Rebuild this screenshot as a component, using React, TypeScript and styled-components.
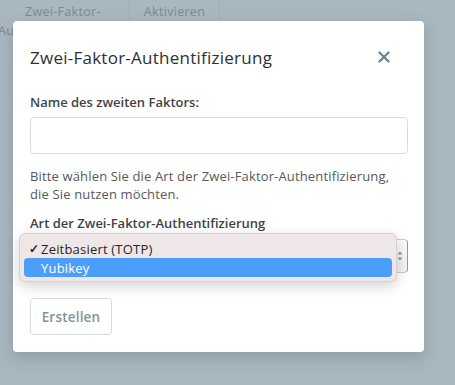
import React from "react";
import styled, { createGlobalStyle } from "styled-components";

const FONT = `"Open Sans", "Noto Sans", "Liberation Sans", sans-serif`;

const GlobalStyle = createGlobalStyle`
  html, body { margin: 0; padding: 0; }
  body { background: #a9b7bf; font-family: ${FONT}; }
`;

const Page = styled.div`
  position: relative;
  width: 455px;
  height: 385px;
  overflow: hidden;
  background: #a9b7bf;
`;

const BgRow = styled.div`
  display: flex;
  align-items: flex-start;
  height: 60px;
`;

const BgCell = styled.div<{ $w: number }>`
  width: ${(p) => p.$w}px;
  box-sizing: border-box;
  height: 60px;
  border-right: 1px solid #9eadb5;
  color: #7a8b94;
  font-size: 12.5px;
  font-weight: 500;
  letter-spacing: 0.3px;
  line-height: 19px;
  text-align: center;
  padding-top: 2px;
  overflow: hidden;
`;

const BgLine = styled.div<{ $indent: number }>`
  margin-left: ${(p) => p.$indent}px;
  white-space: nowrap;
`;

const BgCellLeft = styled(BgCell)`
  text-align: left;
`;

const Modal = styled.div`
  position: absolute;
  left: 13px;
  top: 21px;
  width: 411px;
  height: 331px;
  box-sizing: border-box;
  background: #ffffff;
  border-radius: 4px;
  box-shadow: 0 6px 16px rgba(60, 80, 90, 0.25);
  padding: 22px 16px 17px 17px;
  display: flex;
  flex-direction: column;
`;

const Header = styled.div`
  display: flex;
  align-items: center;
  justify-content: space-between;
  height: 28px;
`;

const Title = styled.h2`
  margin: 0;
  font-size: 17px;
  font-weight: 500;
  color: #2d3133;
  letter-spacing: 0.25px;
`;

const CloseButton = styled.button`
  border: 0;
  background: none;
  padding: 0;
  margin-right: 17px;
  width: 14px;
  height: 14px;
  display: flex;
  align-items: center;
  justify-content: center;
  cursor: pointer;
`;

const Label = styled.label<{ $mt: number }>`
  display: block;
  margin-top: ${(p) => p.$mt}px;
  font-size: 13px;
  font-weight: 600;
  line-height: 18px;
  color: #3f4446;
`;

const Input = styled.input`
  box-sizing: border-box;
  margin-top: 6px;
  width: 378px;
  height: 37px;
  border: 1px solid #d9dcde;
  border-radius: 4px;
  outline: none;
  font-family: ${FONT};
`;

const Help = styled.p`
  margin: 13px 0 0;
  font-size: 13px;
  line-height: 18px;
  color: #55595b;
  letter-spacing: 0.15px;
`;

const SelectWrap = styled.div`
  position: relative;
  margin-top: 7px;
  width: 378px;
  height: 34px;
  box-sizing: border-box;
  border: 1px solid #c6ced3;
  border-right-color: #8d9ba4;
  border-radius: 4px;
  background: linear-gradient(#fbfbfb, #eef0f1);
  display: flex;
  align-items: center;
  justify-content: flex-end;
  padding-right: 4px;
`;

const Dropdown = styled.ul`
  position: absolute;
  left: -12px;
  top: -7px;
  width: 378px;
  box-sizing: border-box;
  margin: 0;
  padding: 5px 4px 4px;
  list-style: none;
  background: #efe6e8;
  border: 1px solid #d8d0d2;
  border-radius: 6px;
  box-shadow: 0 4px 14px rgba(0, 0, 0, 0.18);
`;

const Option = styled.li<{ $active?: boolean }>`
  display: flex;
  align-items: center;
  height: 19px;
  border-radius: 4px;
  font-size: 13px;
  font-weight: 500;
  letter-spacing: 0.2px;
  color: ${(p) => (p.$active ? "#ffffff" : "#262626")};
  background: ${(p) => (p.$active ? "#4b9ffb" : "transparent")};
`;

const Check = styled.span`
  width: 12px;
  margin-left: 5px;
  font-size: 12px;
  font-weight: 700;
`;

const Button = styled.button`
  margin-top: 25px;
  align-self: flex-start;
  width: 82px;
  height: 37px;
  box-sizing: border-box;
  border: 1px solid #d6dbde;
  border-radius: 4px;
  background: #fff;
  color: #7f939e;
  font-family: ${FONT};
  font-size: 13.5px;
  font-weight: 600;
  letter-spacing: 0.2px;
`;

export default function App() {
  return (
    <Page>
      <GlobalStyle />
      <BgRow>
        <BgCellLeft $w={130}>
          <BgLine $indent={25}>Zwei-Faktor-</BgLine>
          <BgLine $indent={-2}>Authentifizierung</BgLine>
        </BgCellLeft>
        <BgCell $w={90}>Aktivieren</BgCell>
      </BgRow>
      <Modal>
        <Header>
          <Title>Zwei-Faktor-Authentifizierung</Title>
          <CloseButton aria-label="Schließen">
            <svg width="12" height="12" viewBox="0 0 12 12">
              <path d="M1.5 1.5 L10.5 10.5 M10.5 1.5 L1.5 10.5" stroke="#6c8593" strokeWidth="2.4" strokeLinecap="round" />
            </svg>
          </CloseButton>
        </Header>
        <Label $mt={22}>Name des zweiten Faktors:</Label>
        <Input type="text" />
        <Help>
          Bitte wählen Sie die Art der Zwei-Faktor-Authentifizierung,
          <br />
          die Sie nutzen möchten.
        </Help>
        <Label $mt={11}>Art der Zwei-Faktor-Authentifizierung</Label>
        <SelectWrap>
          <svg width="6" height="12" viewBox="0 0 6 12">
            <path d="M0.5 4.5 L3 1.5 L5.5 4.5 Z M0.5 7.5 L3 10.5 L5.5 7.5 Z" fill="#8d9aa2" />
          </svg>
          <Dropdown>
            <Option>
              <Check>✓</Check>Zeitbasiert (TOTP)
            </Option>
            <Option $active>
              <Check />Yubikey
            </Option>
          </Dropdown>
        </SelectWrap>
        <Button>Erstellen</Button>
      </Modal>
    </Page>
  );
}
